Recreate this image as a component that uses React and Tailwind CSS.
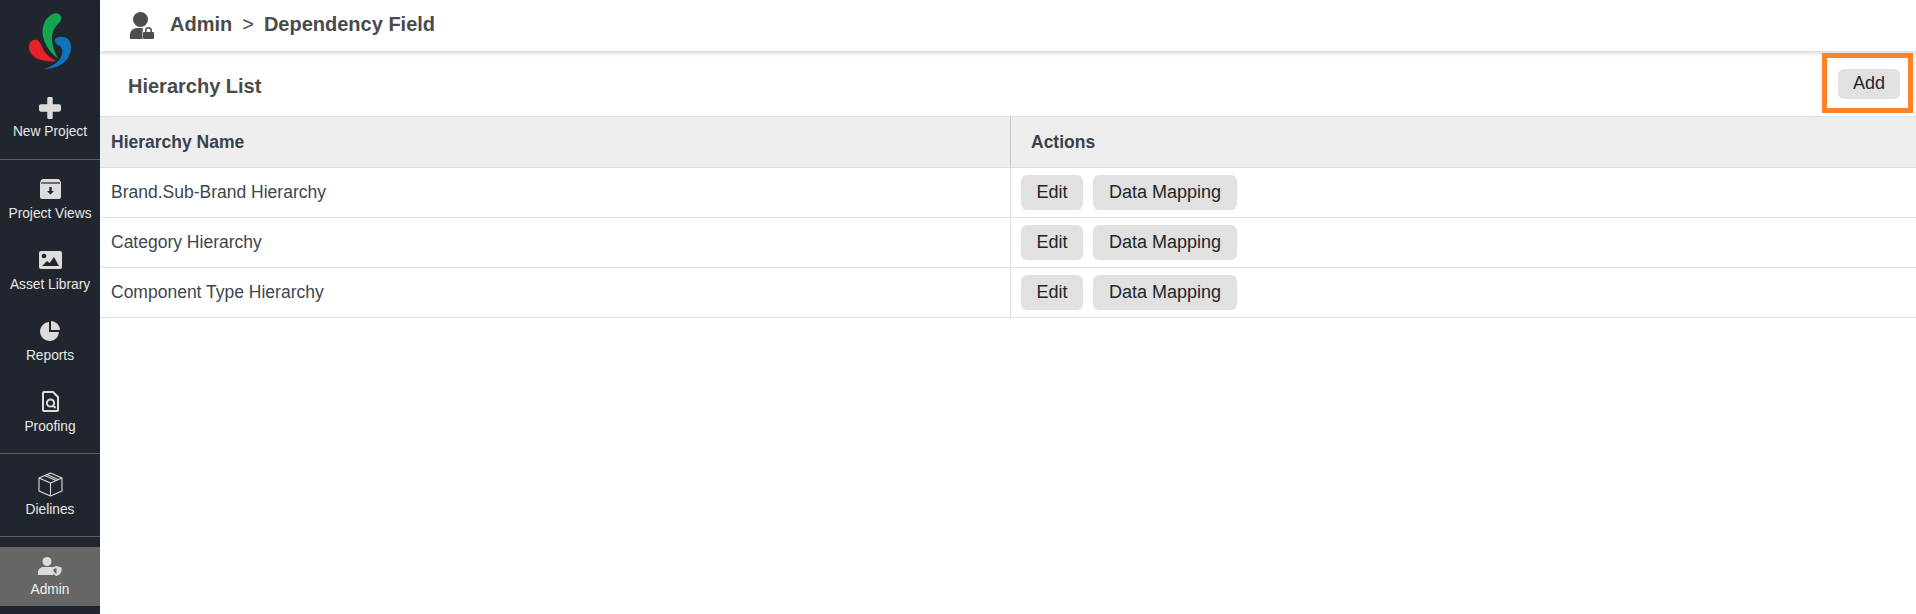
const font = { fontFamily: '"Liberation Sans", Arial, sans-serif' };

const Logo = () => (
  <svg width="44" height="60" viewBox="0 0 44 60">
    <path d="M26 1.500c5-1.500 8 2 7 6-1 4-6 6-8 12-2 6-1 12 1 18 1 4 3 7 4 9-7-5-13-13-15-22C13 14 18 4 26 1.500Z" fill="#12a650" />
    <path d="M1 33c1-4 5-6 8-5 4 2 5 8 8 12 3 4 7 7 11 9-6 1-14 0-20-3C3 43 0 38 1 33Z" fill="#e8202a" />
    <path d="M27 27c3-3 9-3 13 0 4 4 4 12 0 19-5 7-13 11-25 11 8-2 15-6 18-12 2-4 2-8-1-11-3-1-6-4-5-7Z" fill="#0f72bd" />
  </svg>
);

const PlusIcon = () => (
  <svg width="22" height="22" viewBox="0 0 24 24" fill="#dcdcdc">
    <path d="M9 1.500a1.500 1.500 0 0 1 1.500-1.500h3A1.500 1.500 0 0 1 15 1.500V8h7a2 2 0 0 1 2 2v4a2 2 0 0 1-2 2h-7v6.500a1.500 1.500 0 0 1-1.500 1.500h-3A1.500 1.500 0 0 1 9 22.500V16H2a2 2 0 0 1-2-2v-4a2 2 0 0 1 2-2h7Z" />
  </svg>
);

const ViewsIcon = () => (
  <svg width="21" height="20" viewBox="0 0 21 20">
    <path d="M3 0h15a2 2 0 0 1 2 1.500l1 2V18a2 2 0 0 1-2 2H2a2 2 0 0 1-2-2V3.500l1-2A2 2 0 0 1 3 0Z" fill="#dcdcdc" />
    <path d="M1 4h19" stroke="#21262e" strokeWidth="1.200" />
    <path d="M9.300 8h2.400v4h2.300l-3.500 3.500L7 12h2.300Z" fill="#21262e" />
  </svg>
);

const ImageIcon = () => (
  <svg width="23" height="18" viewBox="0 0 23 18">
    <rect width="23" height="18" rx="2" fill="#dcdcdc" />
    <circle cx="5" cy="5" r="2.300" fill="#21262e" />
    <path d="M3 15l5-5 2.500 2 4.500-6 5 9Z" fill="#21262e" />
  </svg>
);

const PieIcon = () => (
  <svg width="20" height="20" viewBox="0 0 20 20" fill="#dcdcdc">
    <path d="M9 1v10h10a9.500 9.500 0 1 1-10-10Z" />
    <path d="M11 0a9 9 0 0 1 9 9h-9Z" />
  </svg>
);

const ProofIcon = () => (
  <svg width="17" height="21" viewBox="0 0 17 21" fill="none" stroke="#dcdcdc" strokeWidth="2">
    <path d="M2 1h9l5 5v13a1 1 0 0 1-1 1H2a1 1 0 0 1-1-1V2a1 1 0 0 1 1-1Z" />
    <circle cx="8.500" cy="12" r="3.600" />
    <path d="M11 14.500l2.500 2.500" />
  </svg>
);

const BoxIcon = () => (
  <svg width="25" height="25" viewBox="0 0 25 25" fill="none" stroke="#dcdcdc" strokeWidth="1.100" strokeLinejoin="round">
    <path d="M12.500 1 24 6v13l-11.500 5L1 19V6Z" />
    <path d="M1 6l11.500 5L24 6M12.500 11v13" />
    <path d="M6.500 3.500 18 8.500M9 2.500l11 5" />
  </svg>
);

const AdminIcon = () => (
  <svg width="24" height="19" viewBox="0 0 24 19">
    <circle cx="9" cy="4.500" r="4.500" fill="#dcdcdc" />
    <path d="M0 18v-3c0-3 3-5 6-5h6c1.500 0 3 .5 3 1v7Z" fill="#dcdcdc" />
    <path d="M18.500 9l5 1.500v3c0 2.500-2 4.500-5 5.500-3-1-5-3-5-5.500v-3Z" fill="#dcdcdc" />
    <path d="M18.500 11v6c-1.500-.8-3-2-3-3.500v-1.500Z" fill="#666666" />
  </svg>
);

const UserLockIcon = () => (
  <svg width="24" height="28" viewBox="0 0 24 28" fill="#4d4d4d">
    <circle cx="10.500" cy="7.500" r="7.500" />
    <path d="M0 27v-4c0-4 3-7 7-7h4c1 0 2 .2 2.500.6-.8 1-1 2-1 3.400v7Z" />
    <path d="M15 20v-1.500a3.500 3.500 0 0 1 7 0V20h1a1 1 0 0 1 1 1v5a1 1 0 0 1-1 1h-9a1 1 0 0 1-1-1v-5a1 1 0 0 1 1-1Zm1.500 0h4v-1.500a2 2 0 0 0-4 0Z" />
  </svg>
);

const NavItem = ({ icon, label, active }) => (
  <div className={`flex flex-col items-center justify-center ${active ? "h-[59px] bg-[#666666] gap-[3px] pb-[3px] text-[#f2f2f2]" : "h-[71px] gap-[5px] pt-[4px] text-[#e8e8e8]"}`}>
    <div className="flex items-center justify-center h-[25px]">{icon}</div>
    <span className="text-[13.75px] leading-[15px]">{label}</span>
  </div>
);

const NewProject = () => (
  <div className="flex flex-col items-center gap-[5px] text-[#e8e8e8]">
    <PlusIcon />
    <span className="text-[13.75px] leading-[15px]">New Project</span>
  </div>
);

const rows = ["Brand.Sub-Brand Hierarchy", "Category Hierarchy", "Component Type Hierarchy"];

const ActionButton = ({ children, className }) => (
  <button className={`h-[35px] rounded-[6px] bg-[#e1e1e1] text-[18px] text-[#212529] ${className}`}>{children}</button>
);

export default function App() {
  return (
    <div className="flex h-[614px] w-[1916px] bg-white overflow-hidden relative" style={font}>
      {/* sidebar */}
      <aside className="w-[100px] shrink-0 bg-[#21262e] flex flex-col">
        <div className="h-[80px] flex items-center justify-center pt-[4px]">
          <Logo />
        </div>
        <div className="h-[80px] pt-[17px] border-b border-[#5a5e63]">
          <NewProject />
        </div>
        <div className="pt-[1px] pb-[8px] border-b border-[#5a5e63]">
          <NavItem icon={<ViewsIcon />} label="Project Views" />
          <NavItem icon={<ImageIcon />} label="Asset Library" />
          <NavItem icon={<PieIcon />} label="Reports" />
          <NavItem icon={<ProofIcon />} label="Proofing" />
        </div>
        <div className="border-b border-[#5a5e63] h-[83px] pb-[6px] flex flex-col justify-center">
          <NavItem icon={<BoxIcon />} label="Dielines" />
        </div>
        <div className="pt-[10px]">
          <NavItem icon={<AdminIcon />} label="Admin" active />
        </div>
      </aside>

      <main className="flex-1 min-w-0 flex flex-col">
        {/* breadcrumb */}
        <header className="h-[51px] shrink-0 flex items-center pl-[30px] shadow-[0_2px_5px_rgba(0,0,0,0.18)] text-[#4a4a4a] font-bold text-[20px]">
          <UserLockIcon />
          <div className="flex mb-[3px]">
            <span className="ml-[16px]">Admin</span>
            <span className="mx-[10px] font-normal">&gt;</span>
            <span>Dependency Field</span>
          </div>
        </header>

        {/* list title */}
        <div className="h-[65px] shrink-0 flex items-center justify-between pl-[28px] pr-[16px]">
          <h2 className="text-[20px] font-bold text-[#4a4a4a] mt-[5px]">Hierarchy List</h2>
          <ActionButton className="!h-[30px] w-[62px]">Add</ActionButton>
        </div>

        {/* table */}
        <div className="grid grid-cols-[911px_1fr] text-[17.5px] text-[#3c4650]">
          <div className="h-[52px] flex items-center pl-[11px] bg-[#eeeeee] border-t border-b border-[#e0e0e0] border-r-[#c4c4c4] border-r font-bold text-[#37424e]">Hierarchy Name</div>
          <div className="h-[52px] flex items-center pl-[20px] bg-[#eeeeee] border-t border-b border-[#e0e0e0] font-bold text-[#37424e]">Actions</div>
          {rows.map((name) => (
            <div key={name} className="contents">
              <div className="h-[50px] flex items-center pl-[11px] border-b border-r border-[#e0e0e0]">{name}</div>
              <div className="h-[50px] flex items-center gap-[10px] pl-[10px] border-b border-[#e0e0e0]">
                <ActionButton className="w-[62px]">Edit</ActionButton>
                <ActionButton className="w-[144px]">Data Mapping</ActionButton>
              </div>
            </div>
          ))}
        </div>
      </main>

      {/* highlight box */}
      <div className="absolute left-[1822px] top-[53px] w-[91px] h-[60px] border-[5px] border-[#ff8229] pointer-events-none" />
    </div>
  );
}
